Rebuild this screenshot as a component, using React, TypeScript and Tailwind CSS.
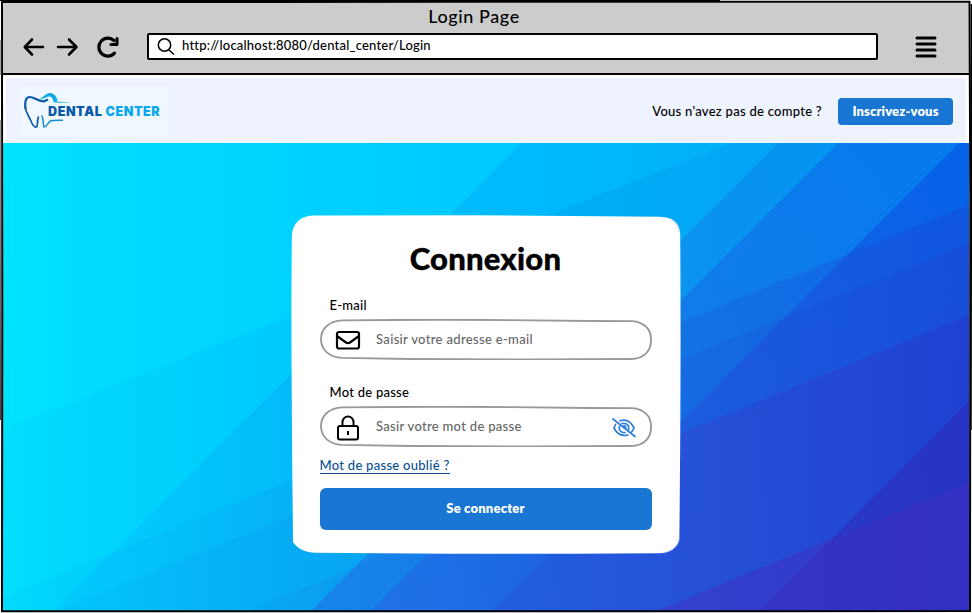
import React from "react";

const steep = [
  { s: 665, id: "b1" },
  { s: 922, id: "b2" },
  { s: 982, id: "b3" },
  { s: 1103, id: "b4" },
];

function Backdrop() {
  return (
    <svg
      className="absolute inset-0 h-full w-full"
      viewBox="3 143 967 468"
      preserveAspectRatio="none"
      aria-hidden="true"
    >
      <defs>
        <linearGradient id="b0" gradientUnits="userSpaceOnUse" x1="3" y1="143" x2="520" y2="143">
          <stop offset="0" stopColor="#00e4ff" />
          <stop offset="0.15" stopColor="#00dcff" />
          <stop offset="1" stopColor="#00c8ff" />
        </linearGradient>
        <linearGradient id="b1" gradientUnits="userSpaceOnUse" x1="50" y1="0" x2="780" y2="0">
          <stop offset="0" stopColor="#00d6ff" />
          <stop offset="0.35" stopColor="#04c0fa" />
          <stop offset="0.7" stopColor="#00b9fd" />
          <stop offset="1" stopColor="#02aef8" />
        </linearGradient>
        <linearGradient id="b2" gradientUnits="userSpaceOnUse" x1="300" y1="0" x2="842" y2="0">
          <stop offset="0" stopColor="#1a92ee" />
          <stop offset="1" stopColor="#059cf4" />
        </linearGradient>
        <linearGradient id="b3" gradientUnits="userSpaceOnUse" x1="366" y1="610" x2="900" y2="143">
          <stop offset="0" stopColor="#2878e8" />
          <stop offset="1" stopColor="#0680f0" />
        </linearGradient>
        <linearGradient id="b4" gradientUnits="userSpaceOnUse" x1="490" y1="610" x2="970" y2="143">
          <stop offset="0" stopColor="#2c5cdf" />
          <stop offset="0.5" stopColor="#1e5fe3" />
          <stop offset="1" stopColor="#0464ea" />
        </linearGradient>
        <linearGradient id="shadeF" gradientUnits="userSpaceOnUse" x1="3" y1="0" x2="970" y2="0">
          <stop offset="0" stopColor="#0090f0" stopOpacity="0.06" />
          <stop offset="0.6" stopColor="#0880e0" stopOpacity="0.18" />
          <stop offset="1" stopColor="#0458e0" stopOpacity="0.14" />
        </linearGradient>
        <linearGradient id="shadeG" gradientUnits="userSpaceOnUse" x1="3" y1="0" x2="970" y2="0">
          <stop offset="0" stopColor="#1478e6" stopOpacity="0.05" />
          <stop offset="0.35" stopColor="#1468e2" stopOpacity="0.11" />
          <stop offset="1" stopColor="#2040d0" stopOpacity="0.34" />
        </linearGradient>
        <linearGradient id="shadeI" gradientUnits="userSpaceOnUse" x1="248" y1="0" x2="970" y2="0">
          <stop offset="0" stopColor="#1468e2" stopOpacity="0.08" />
          <stop offset="0.3" stopColor="#2058e0" stopOpacity="0.2" />
          <stop offset="0.6" stopColor="#2850d8" stopOpacity="0.85" />
          <stop offset="0.8" stopColor="#2448d4" stopOpacity="0.9" />
          <stop offset="1" stopColor="#1e40d0" stopOpacity="0.95" />
        </linearGradient>
      </defs>
      <rect x="3" y="143" width="967" height="468" fill="url(#b0)" />
      {steep.map((b) => (
        <polygon
          key={b.id}
          fill={`url(#${b.id})`}
          points={`${b.s - 143},143 1500,143 1500,611 ${b.s - 611},611`}
        />
      ))}
      <polygon points="732,143 970,143 970,611 3,611 3,429" fill="url(#shadeF)" />
      <polygon points="970,205 970,611 3,611 3,597" fill="url(#shadeG)" />
      <polygon points="970,243 970,611 55,611" fill="url(#shadeG)" />
      <polygon points="970,315 970,611 248,611" fill="url(#shadeI)" />
      <polygon points="970,401 970,611 760,611" fill="#3028bc" fillOpacity="0.5" />
      <polygon points="970,482 970,611 657,611" fill="#422cbc" fillOpacity="0.45" />
    </svg>
  );
}

function Field({ icon, text, children }: { icon: React.ReactNode; text: React.ReactNode; children?: React.ReactNode }) {
  return (
    <div className="relative flex h-[41px] w-[332px] items-center">
      <svg className="absolute inset-0" width="332" height="41" viewBox="0 0 332 41" fill="none" aria-hidden="true">
        <path
          d="M22 1.4C80 .7 150 .8 190 1.1L270 2L312 2.1C324 3 331 10 331 20C331.5 32 324 39.800 311 40C250 40.600 130 40.500 90 40L22 38.900C9 38 1.500 31 1 21C.6 10 9 2 22 1.400Z"
          stroke="#999"
          strokeWidth="1.9"
        />
      </svg>
      <span className="relative flex w-14 justify-center">{icon}</span>
      <span className="relative flex-1 pb-px text-[13px] leading-4 font-medium text-[#666]">{text}</span>
      {children}
    </div>
  );
}

export default function App() {
  return (
    <div className="relative flex h-[613px] w-[972px] flex-col overflow-hidden bg-white px-[3px] pt-[3px] font-['Lato',sans-serif] text-black">
      <header className="flex h-[70px] shrink-0 flex-col bg-[#ccc]">
        <h1 className="mt-[2px] h-[22px] pr-[24px] text-center text-[18px] leading-[22px] font-medium tracking-[0.6px]">Login Page</h1>
        <div className="mt-[5px] flex h-[28px] items-center">
          <svg className="ml-[19px]" width="100" height="28" viewBox="22 33 100 28" fill="none" stroke="#000" strokeWidth="2.6" strokeLinecap="round" strokeLinejoin="round">
            <path d="M43 48H25M32 40.500L24.800 48L32 55.500M58 48H76M69 40.500L76.500 48L69 55.500" />
            <path d="M114.500 54.200A9 9 0 1 1 114 41.500" strokeWidth="3.2" />
            <path d="M117 39.500V45.500H111" strokeWidth="3" />
          </svg>
          <div className="ml-[25px] flex h-[27px] w-[731px] items-center rounded-[2px] border-2 border-black bg-white">
            <svg className="ml-[8px]" width="18" height="18" viewBox="0 0 18 18" fill="none" stroke="#000" strokeWidth="1.500" strokeLinecap="round">
              <circle cx="7.500" cy="8" r="6.200" />
              <path d="M12 13L16.500 17" />
            </svg>
            <span className="ml-[7px] pb-[2px] text-[13px] leading-4 font-medium tracking-[0.2px]">http://localhost:8080/dental_center/Login</span>
          </div>
          <svg className="mt-[2px] ml-[36px]" width="24" height="26" viewBox="0 0 24 26" stroke="#000" strokeWidth="3" strokeLinecap="round">
            <path d="M3 4H21M3 10H21M3 16H21M3 22H21" />
          </svg>
        </div>
      </header>
      <div className="h-[2px] shrink-0 bg-black" />
      <nav className="mx-[3px] mt-[3px] flex h-[65px] shrink-0 items-center bg-[#eff3fd] pr-[13px]">
        <div className="mt-[2px] ml-4 flex h-[49px] w-[146px] items-center bg-[#f0f7ff]">
          <svg className="shrink-0" width="50" height="49" viewBox="22 87 50 49" fill="none">
            <path d="M40 98.500C44 97 46 93 50 93C54 93.500 57 96 57.500 101.500H53.500C53 98 51 96 48 96.500C46 97.500 43 99.500 40 98.500Z" fill="#0da9e8" />
            <path d="M54 101.200C60 102 65 101.700 71 102.500C63 102.600 58 102.800 53.500 102.500Z" fill="#0da9e8" />
            <path d="M25.500 109C24.500 102 25.500 97.500 29.500 97C34 96.500 37 101.500 44 101.300L48 99.500" stroke="#0b59a9" strokeWidth="2.200" />
            <path d="M25 106C26 114 29 116 30.500 120C32 124 34 127.500 36.500 127C38.500 125 36.500 119 38.800 116.500" stroke="#0b59a9" strokeWidth="1.700" />
            <path d="M41.500 115.500C44 118 42.500 123 44 127C48 126 47.500 122 51 120.800C55 120 59 120.500 63 120.200" stroke="#168fd2" strokeWidth="1.500" />
          </svg>
          <div className="-ml-[24px] whitespace-nowrap font-['Inter',sans-serif] text-[12.500px] leading-4 font-black tracking-[0.6px]">
            <span className="text-[#0758a8]">DENTAL</span> <span className="text-[#09a8ec]">CENTER</span>
          </div>
        </div>
        <span className="ml-auto text-[13px] leading-4 font-medium tracking-[0.27px]">Vous n'avez pas de compte ?</span>
        <button className="mt-[1px] ml-4 h-[27px] w-[115px] rounded-[4px] bg-[#1976d2] pb-px text-[13px] leading-4 font-extrabold tracking-[0.15px] text-white">Inscrivez-vous</button>
      </nav>
      <main className="relative flex h-[468px] shrink-0 justify-center">
        <Backdrop />
        <section className="relative mt-[72px] mr-[1px] flex h-[339px] w-[390px] flex-col items-center">
          <svg className="absolute inset-0" width="390" height="339" viewBox="291 215 390 339" aria-hidden="true">
            <path d="M291.800 237C292 224 300 216 313 215.500L480 215.200L660 216.700C673 217 680 223 680.200 234C681 330 680.500 450 679.300 540C677 549 669 553 660 553.300L570 553.700H450L314 552.700C303 552 297 548 293 542C292 430 290.800 330 291.800 237Z" fill="#fff" />
            <path d="M667 552C674 549 678 545 678.500 540M673 221C677 224 679 228 679 232" fill="none" stroke="#9dc0ee" strokeWidth=".7" />
          </svg>
          <h2 className="relative mt-[23px] text-[31px] leading-10 font-black tracking-[0.2px] [-webkit-text-stroke:0.4px_#000]">Connexion</h2>
          <div className="relative mt-[19px] flex w-[332px] flex-col">
            <label className="ml-[10px] text-[13px] leading-4 font-medium tracking-[0.25px]">E-mail</label>
            <div className="mt-[6px]">
              <Field
                text={<span className="ml-[0.5px] tracking-[0.33px]">Saisir votre adresse e-mail</span>}
                icon={
                  <svg className="mt-px" width="26" height="20" viewBox="0 0 26 20" fill="none" stroke="#000" strokeWidth="2.200" strokeLinejoin="round">
                    <rect x="2" y="2" width="22" height="16.500" rx="2" />
                    <path d="M2 6L11 12.500Q13 13.700 15 12.500L24 6" />
                  </svg>
                }
              />
            </div>
            <label className="mt-[24px] ml-[10px] text-[13px] leading-4 font-medium tracking-[0.25px]">Mot de passe</label>
            <div className="mt-[6px]">
              <Field
                text={<span className="ml-[0.5px] tracking-[0.3px]">Sasir votre mot de passe</span>}
                icon={
                  <svg className="mt-[2px]" width="24" height="26" viewBox="0 0 24 26" fill="none" stroke="#000" strokeWidth="2" strokeLinejoin="round">
                    <rect x="2" y="11" width="20" height="13.500" rx="2" />
                    <path d="M6.500 11V7A5.500 5.500 0 0 1 17.500 7V11M12 16V20" />
                  </svg>
                }
              >
                <svg className="relative mt-[2px] mr-[15px]" width="26" height="22" viewBox="0 0 26 22" fill="none" stroke="#2f7de1" strokeWidth="1.700" strokeLinecap="round">
                  <path d="M2 2L24 19.500M9 3.800C15 1.800 20 5 23 11C22.500 12.500 21.500 14 20.500 15M4.500 7.500L3 11C6 17 11 19.500 17 18M11 6.500C16 5.500 18.500 9 17.500 12.500M8.500 9.500C7.500 13 10 16 14 15.500M12.500 9Q15 8.500 14.500 11" />
                </svg>
              </Field>
            </div>
            <a className="mt-[11px] self-start border-b border-[#0a4f96] text-[13px] leading-[15px] font-medium tracking-[0.28px] text-[#0a4f96]">Mot de passe oublié ?</a>
            <button className="mt-[14px] h-[42px] w-[332px] rounded-[6px] bg-[#1976d2] pb-[2px] text-[13px] leading-4 font-extrabold tracking-[0.2px] text-white">Se connecter</button>
          </div>
        </section>
      </main>
      <svg className="pointer-events-none absolute inset-0" width="972" height="613" viewBox="0 0 972 613" fill="none" stroke="#000" aria-hidden="true">
        <path d="M2 2L500 1.800L969.500 1.700L970.300 200L970 611L500 611.300L2 611.300L2.300 300L2 74Z" strokeWidth="2" />
        <path d="M971.300 4V240L971 430" strokeWidth="1.400" />
        <path d="M1 40V75M1 120L.5 420" stroke="#444" />
        <path d="M0 .5H720" strokeWidth="1" />
      </svg>
    </div>
  );
}
